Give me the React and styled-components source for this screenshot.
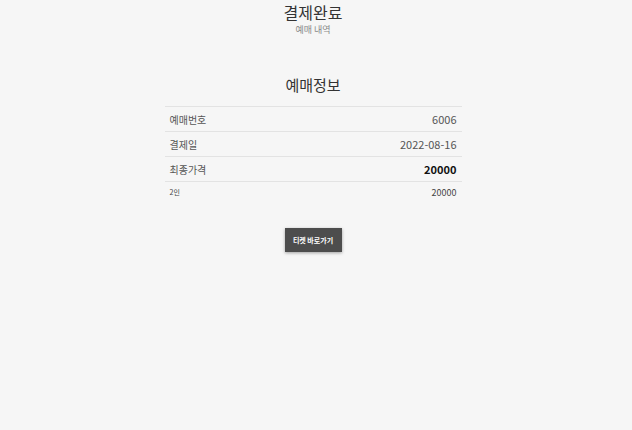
import styled, { createGlobalStyle } from "styled-components";

const GlobalStyle = createGlobalStyle`
  html, body {
    margin: 0;
    padding: 0;
    background: #f6f6f6;
    font-family: "Noto Sans CJK KR", "Noto Sans", sans-serif;
  }
`;

const rows = [
  { label: "예매번호", value: "6006" },
  { label: "결제일", value: "2022-08-16" },
  { label: "최종가격", value: "20000", strong: true },
];

const App = () => {
  return (
    <Page>
      <GlobalStyle />
      <Header>
        <h1>결제완료</h1>
        <p>예매 내역</p>
      </Header>
      <Info>
        <h2>예매정보</h2>
        <Table>
          {rows.map((row) => (
            <Row key={row.label}>
              <span>{row.label}</span>
              <Value $strong={row.strong}>{row.value}</Value>
            </Row>
          ))}
          <SmallRow>
            <span>2인</span>
            <span>20000</span>
          </SmallRow>
        </Table>
      </Info>
      <Button>티켓 바로가기</Button>
    </Page>
  );
};

export default App;

const Page = styled.div`
  width: 626px;
  height: 430px;
  display: flex;
  flex-direction: column;
  align-items: center;
  background: #f6f6f6;
`;

const Header = styled.div`
  display: flex;
  flex-direction: column;
  align-items: center;
  padding-top: 2px;

  h1 {
    margin: 0;
    font-size: 16px;
    line-height: 20px;
    font-weight: 400;
    color: #333;
  }
  p {
    margin: 2px 0 0;
    font-size: 9px;
    line-height: 12px;
    color: #888;
  }
`;

const Info = styled.div`
  margin-top: 39px;
  width: 297px;
  display: flex;
  flex-direction: column;
  align-items: center;

  h2 {
    margin: 0 0 11px;
    font-size: 15px;
    line-height: 20px;
    font-weight: 400;
    color: #333;
  }
`;

const Table = styled.div`
  width: 100%;
  border-top: 1px solid #e3e3e3;
`;

const Row = styled.div`
  display: flex;
  justify-content: space-between;
  align-items: center;
  height: 24px;
  padding: 0 5px;
  border-bottom: 1px solid #e3e3e3;
  font-size: 10px;
  color: #555;
`;

const Value = styled.span`
  font-size: 11px;
  color: ${(p) => (p.$strong ? "#111" : "#555")};
  font-weight: ${(p) => (p.$strong ? 700 : 400)};
`;

const SmallRow = styled.div`
  display: flex;
  justify-content: space-between;
  align-items: center;
  height: 20px;
  padding: 0 5px;
  font-size: 7px;
  color: #444;

  span:last-child {
    font-size: 9px;
  }
`;

const Button = styled.button`
  margin-top: 26px;
  width: 57px;
  height: 24px;
  border: none;
  background: #4d4d4d;
  color: #fff;
  font-family: inherit;
  font-size: 7px;
  font-weight: 700;
  padding: 0;
  box-shadow: 0 1px 3px rgba(0, 0, 0, 0.35);
  cursor: pointer;
`;
